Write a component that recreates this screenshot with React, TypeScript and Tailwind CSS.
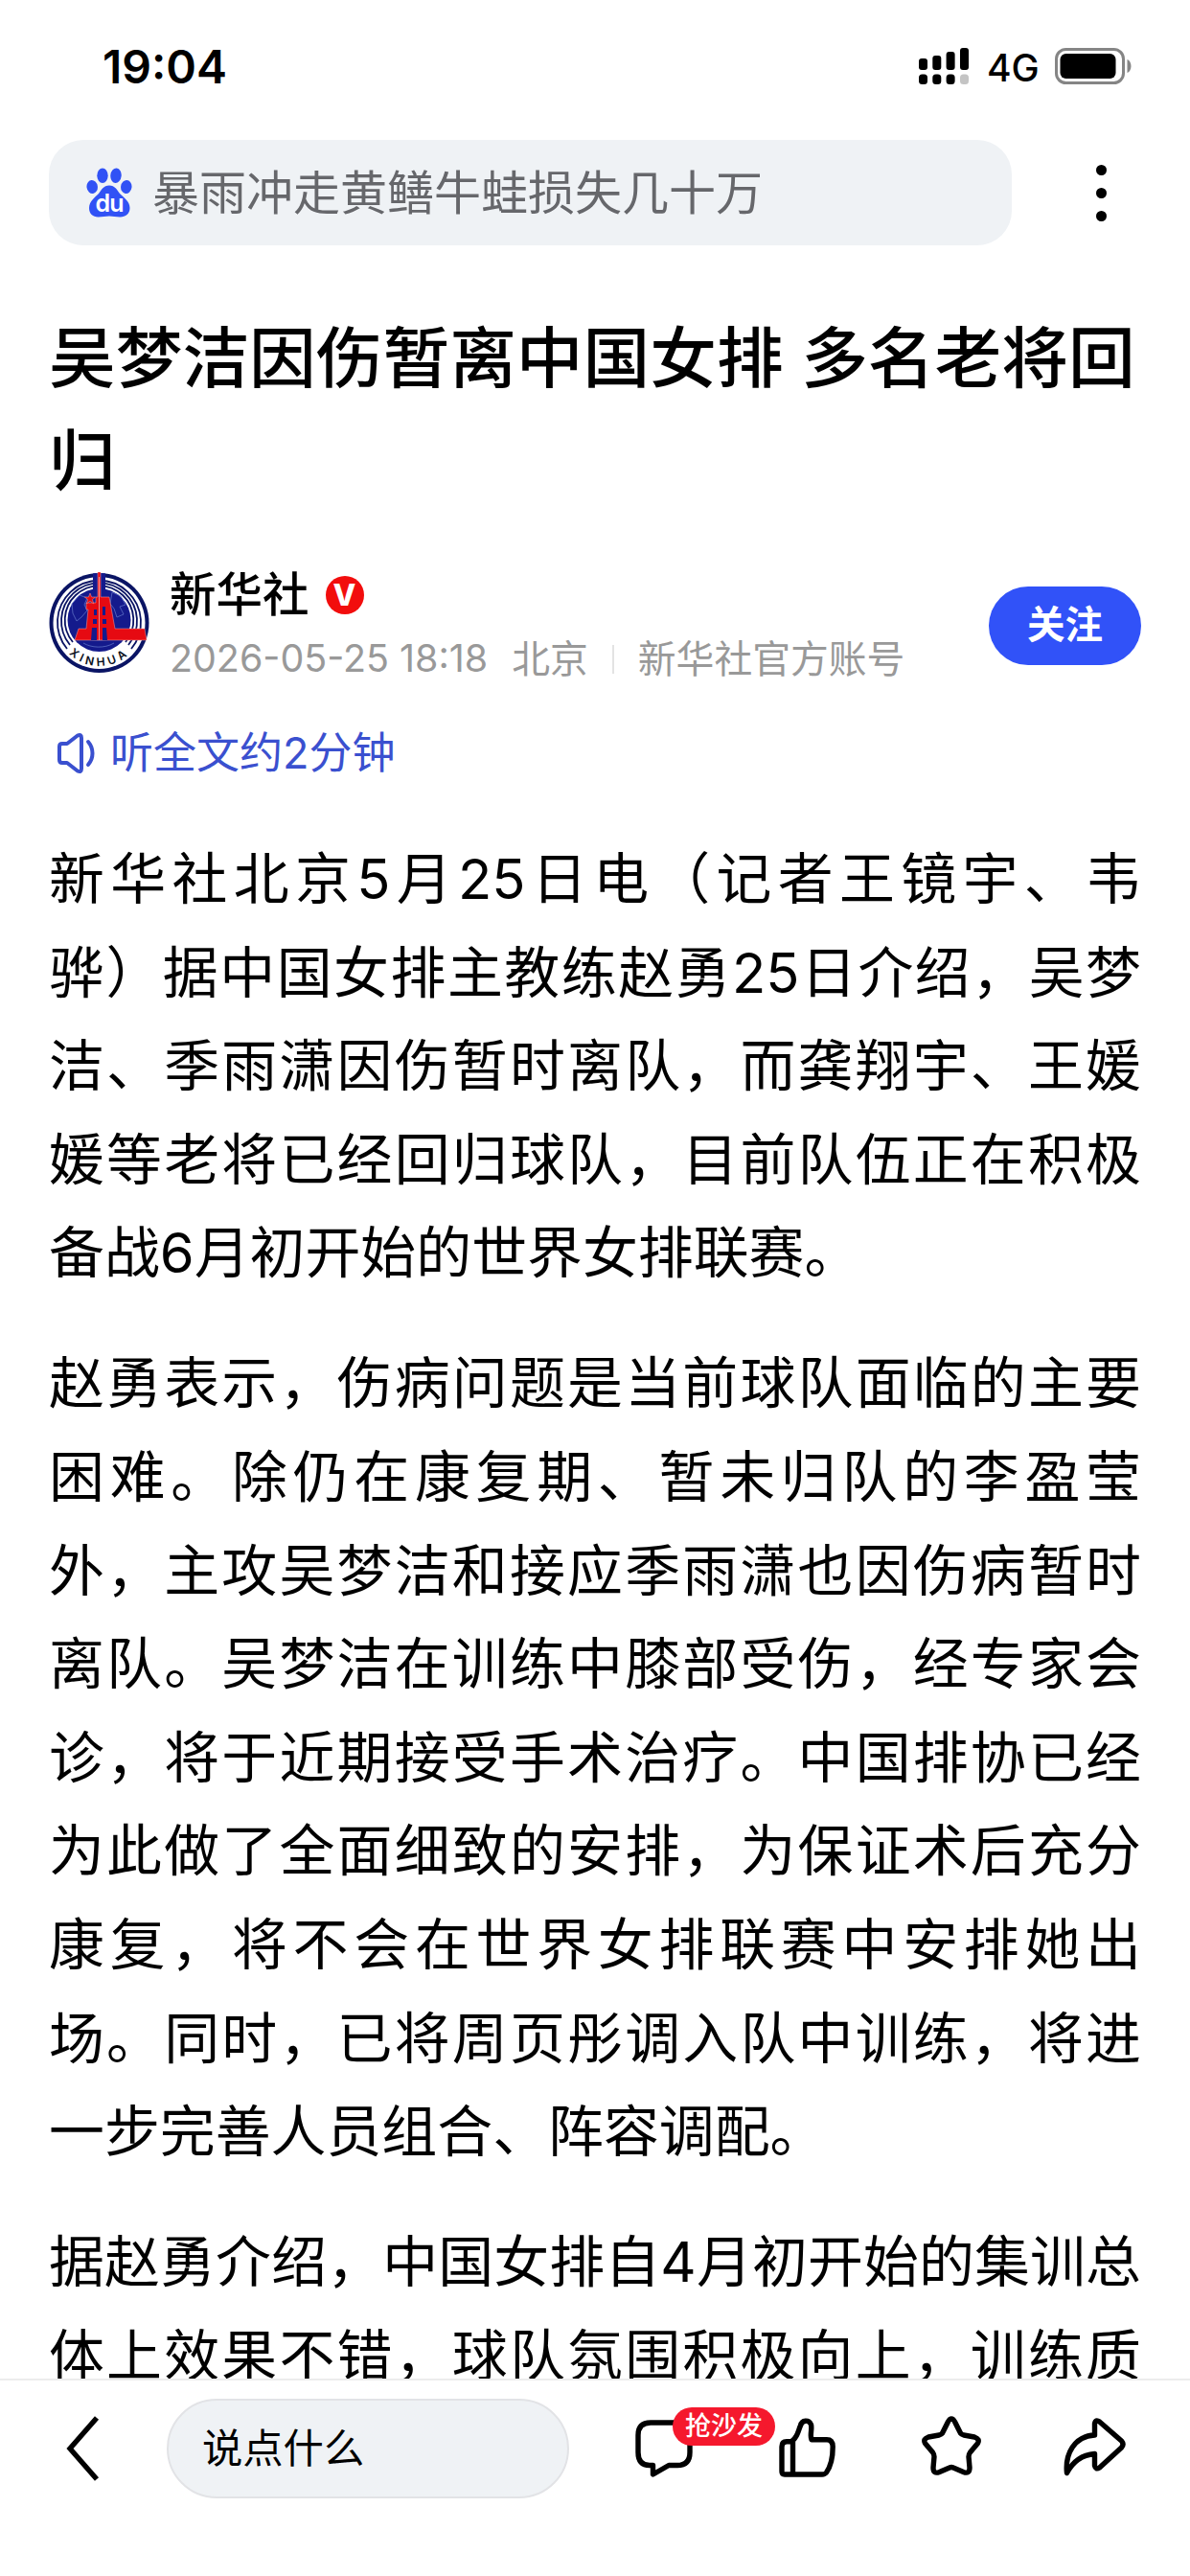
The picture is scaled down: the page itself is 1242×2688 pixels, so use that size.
import type { ReactNode } from "react";

const paragraphs = [
  "新华社北京5月25日电（记者王镜宇、韦骅）据中国女排主教练赵勇25日介绍，吴梦洁、季雨潇因伤暂时离队，而龚翔宇、王媛媛等老将已经回归球队，目前队伍正在积极备战6月初开始的世界女排联赛。",
  "赵勇表示，伤病问题是当前球队面临的主要困难。除仍在康复期、暂未归队的李盈莹外，主攻吴梦洁和接应季雨潇也因伤病暂时离队。吴梦洁在训练中膝部受伤，经专家会诊，将于近期接受手术治疗。中国排协已经为此做了全面细致的安排，为保证术后充分康复，将不会在世界女排联赛中安排她出场。同时，已将周页彤调入队中训练，将进一步完善人员组合、阵容调配。",
];

const signal = [
  { x: 0, top: 11 },
  { x: 14.3, top: 8 },
  { x: 28.6, top: 4 },
  { x: 43, top: 0 },
];

function StatusBar() {
  return (
    <div className="flex h-[146px] items-start justify-between pl-[107px] pr-[60px]">
      <span className="mt-[41px] text-[48px] leading-[58px] font-semibold">
        19:04
      </span>
      <div className="mt-[50px] flex items-start">
        <svg width="52" height="38" viewBox="0 0 52 38">
          {signal.map((bar, idx) => (
            <g key={bar.x}>
              <rect x={bar.x} y={bar.top} width="9" height={23 - bar.top} rx="3" />
              <rect
                x={bar.x}
                y="27.5"
                width="9"
                height="10.5"
                rx="3.5"
                fill={idx === 3 ? "#c4c4c4" : "#000"}
              />
            </g>
          ))}
        </svg>
        <span className="ml-[19px] w-[71px] text-[39px] leading-[42px] font-medium">
          4G
        </span>
        <svg width="81" height="38" viewBox="0 0 81 38">
          <rect x="1.5" y="1.5" width="70" height="35" rx="10" fill="none" stroke="#858585" strokeWidth="3" />
          <rect x="5.5" y="6" width="58" height="26" rx="6" />
          <path d="M75.5 12C80.8 14 80.8 24 75.5 26Z" fill="#858585" />
        </svg>
      </div>
    </div>
  );
}

function BaiduLogo() {
  return (
    <svg width="48" height="52" viewBox="0 0 48 52" fill="#3152f5">
      <ellipse cx="6.2" cy="20" rx="5.7" ry="7" transform="rotate(-8 6.2 20)" />
      <ellipse cx="17" cy="8.2" rx="5.7" ry="7.8" />
      <ellipse cx="31" cy="8.2" rx="5.7" ry="7.8" transform="rotate(6 31 8.2)" />
      <ellipse cx="41.8" cy="20" rx="5.7" ry="7" transform="rotate(8 41.8 20)" />
      <path d="M24 18.5C30 18.5 32 23 35 27C39 31 45.5 35 45.5 42C45.5 48 41 51.5 35.5 51.5C31 51.5 28 50.5 24 50.5C20 50.5 17 51.5 12.5 51.5C7 51.5 3 48 3 42C3 35 9 31 13 27C16 23 18 18.5 24 18.5Z" />
      <text x="9.5" y="46" fontSize="25" fontWeight="600" fill="#fff" textLength="30">
        du
      </text>
    </svg>
  );
}

function XinhuaLogo() {
  return (
    <svg width="105" height="106" viewBox="0 0 105 106" className="shrink-0">
      <defs>
        <clipPath id="disc">
          <circle cx="52.5" cy="53" r="52" />
        </clipPath>
        <path id="ring" d="M16 73A41.5 41.5 0 0 0 89 73" />
      </defs>
      <circle cx="52.5" cy="53" r="52" fill="#0a1464" />
      <circle cx="52.5" cy="53" r="48" fill="#fff" />
      <g fill="none" stroke="#0a1464" strokeWidth="1.8">
        <path d="M19 80A43.5 43.5 0 1 1 86 80" />
        <path d="M22 76A39.5 39.5 0 1 1 83 76" />
        <path d="M25 73A35.8 35.8 0 1 1 80 73" />
      </g>
      <circle cx="52.5" cy="50" r="33" fill="#141a8c" />
      <g fill="none" stroke="#5c6fc4" strokeWidth="0.8">
        <path d="M24 33l8-9 8 3-3 7 3 6-6 7-5 4-4-8z" />
        <path d="M66 21l9 4 5 9-6 2 4 8-7 3-3-9-4-5z" />
        <path d="M36 74c8 5 22 6 32 0M29 68c12 4 34 4 46 0" />
      </g>
      <rect x="46" y="0" width="13" height="32" fill="#141a8c" clipPath="url(#disc)" />
      <g fill="#e60a12" stroke="#f0a6a6" strokeWidth="0.5">
        <path d="M51 0h3v26h9l6 33h31l2 12H27l4-12h8l2-20h-2v-7h10V26h2z" />
        <path d="M43 22l1.6 4h4l-3.1 2.6 1.2 4.2-3.7-2.4-3.7 2.4 1.2-4.2-3.1-2.6h4z" />
      </g>
      <path d="M47 39h3v6h-3zM56 36h3v9h-3zM46 49h4v5h-4zM56 49h4v5h-4zM45 58h5v13h-6zM56 58h4l1 13h-5z" fill="#141a8c" />
      <path d="M52.5 5V71" stroke="#f3c0c0" strokeWidth="0.7" />
      <text fontSize="12" fontWeight="600" fill="#0a1020" letterSpacing="3">
        <textPath href="#ring" startOffset="50%" textAnchor="middle" dominantBaseline="middle">
          XINHUA
        </textPath>
      </text>
    </svg>
  );
}

function ToolIcon({ width, height, children }: { width: number; height: number; children: ReactNode }) {
  return (
    <svg
      width={width}
      height={height}
      viewBox={`0 0 ${width} ${height}`}
      fill="none"
      stroke="#000"
      strokeWidth="5.4"
      strokeLinejoin="round"
      className="shrink-0"
    >
      {children}
    </svg>
  );
}

function Toolbar() {
  return (
    <footer className="flex h-[206px] shrink-0 items-start border-t-2 border-[#ececec] bg-white pl-[68px]">
      <svg width="36" height="68" viewBox="0 0 36 68" fill="none" stroke="#000" strokeWidth="5.4" className="mt-[37px]">
        <path d="M33 2L5 34L33 66" />
      </svg>
      <div className="ml-[70px] mt-[19px] flex h-[104px] w-[420px] items-center rounded-full border-2 border-[#e2e3e6] bg-[#eff2f5] pl-[35px] text-[42.3px]">
        说点什么
      </div>
      <div className="relative ml-[69px] mt-[41px]">
        <ToolIcon width={60} height={61}>
          <path d="M16 3H44Q57 3 57 16V34Q57 47.5 44 47.5H35L18.5 57V47.5H15Q3 47.5 3 34V16Q3 3 16 3Z" />
        </ToolIcon>
        <span className="absolute -top-[13px] left-[39px] flex h-[40px] w-[107px] items-center justify-center rounded-full bg-[#f5182d] pt-px text-[27px] font-medium whitespace-nowrap text-white">
          抢沙发
        </span>
      </div>
      <div className="ml-[90px] mt-[39px]">
        <ToolIcon width={60} height={62}>
          <path d="M3 30Q3 24.8 8 24.8H13C20 20 20 13 22.5 8C24 2 31 1.5 33.5 7C34.8 12 32 18 34 22.8H50Q56 22.8 56.2 30C56.2 44 53 52 49.5 57Q48 59 45 59H6Q3 59 3 56ZM14.5 24V59" />
        </ToolIcon>
      </div>
      <div className="ml-[89px] mt-[37px]">
        <ToolIcon width={62} height={62}>
          <path d="M27.5 6Q31 0 34.5 6L40 17Q41 19.5 44 20L55 22Q61 24 58.5 28.5L50.5 38Q49 40 49 42.5L50 54Q50 61 43.5 58.5L33 54Q31 53 29 54L18.5 58.5Q12 61 12 54L13 42.5Q13 40 11.5 38L3.5 28.5Q1 24 7 22L18 20Q21 19.5 22 17Z" />
        </ToolIcon>
      </div>
      <div className="ml-[86px] mt-[39px]">
        <ToolIcon width={66} height={62}>
          <path d="M32.5 6Q33.5 1 37.5 4L60.5 24Q63.5 27.5 60.5 31L37.5 52Q33.5 54.5 32.5 50V37.5C21 38.5 10 45 3.5 57.5C1.5 38 11 19 32.5 18Z" />
        </ToolIcon>
      </div>
    </footer>
  );
}

export default function App() {
  return (
    <div className="flex h-[2688px] w-[1242px] flex-col overflow-hidden bg-white font-[Inter,'Noto_Sans_CJK_SC',sans-serif] text-black [text-spacing-trim:space-all]">
      <StatusBar />

      <header className="flex shrink-0 items-center pl-[51px]">
        <div className="flex h-[110px] w-[1005px] items-center rounded-[36px] bg-[#eff2f5] pl-[39px]">
          <BaiduLogo />
          <span className="ml-[21px] pt-[2px] text-[49px] text-[#66676b]">
            暴雨冲走黄鳝牛蛙损失几十万
          </span>
        </div>
        <div className="ml-[88px] flex flex-col gap-[13px]">
          <i className="size-[11px] rounded-full bg-black" />
          <i className="size-[11px] rounded-full bg-black" />
          <i className="size-[11px] rounded-full bg-black" />
        </div>
      </header>

      <main className="min-h-0 flex-1 overflow-hidden px-[51px]">
        <h1 className="-mr-4 mt-[64px] text-[69.7px] leading-[107px] font-medium">
          吴梦洁因伤暂离中国女排 多名老将回归
        </h1>

        <div className="mt-[59px] flex h-[116px] items-center">
          <div className="-mt-[3px]">
            <XinhuaLogo />
          </div>
          <div className="ml-[21px] flex flex-col">
            <div className="flex h-[56px] items-center">
              <span className="text-[48.5px] font-medium">新华社</span>
              <span className="ml-[17px] flex size-[40px] items-center justify-center rounded-full bg-[#f20d0d] text-[31px] font-extrabold text-white">
                V
              </span>
            </div>
            <div className="flex h-[60px] items-center pt-[17px] text-[39.8px] whitespace-nowrap text-[#999]">
              <span className="text-[39.4px]">2026-05-25 18:18</span>
              <span className="ml-[25px]">北京</span>
              <i className="mx-[25px] h-[30px] w-[2px] bg-[#e3e3e3]" />
              <span>新华社官方账号</span>
            </div>
          </div>
          <button className="mt-[4px] ml-auto h-[82px] w-[159px] rounded-full bg-[#3152f8] text-[39.5px] font-bold text-white">
            关注
          </button>
        </div>

        <div className="mt-[47px] flex h-[60px] items-center text-[45px] text-[#3a50cf]">
          <svg width="42" height="44" viewBox="0 0 42 44" fill="none" stroke="#3a50cf" strokeWidth="4" strokeLinejoin="round" strokeLinecap="round" className="ml-[8px]">
            <path d="M6 12H11L22 3.5Q26 1.5 26 6V38Q26 42.5 22 40.5L11 32H6Q3 32 3 29V15Q3 12 6 12Z" />
            <path d="M33 10C39 17 39 27 33 34" />
          </svg>
          <span className="ml-[14px]">听全文约2分钟</span>
        </div>

        <article className="mt-[53px] flex flex-col gap-[38.5px] text-justify text-[57.9px] leading-[97.6px]">
          {paragraphs.map((text, idx) => (
            <p key={idx}>{text}</p>
          ))}
          <p className="[text-align-last:justify]">
            据赵勇介绍，中国女排自4月初开始的集训总体上效果不错，球队氛围积极向上，训练质
          </p>
        </article>
      </main>

      <Toolbar />
    </div>
  );
}
